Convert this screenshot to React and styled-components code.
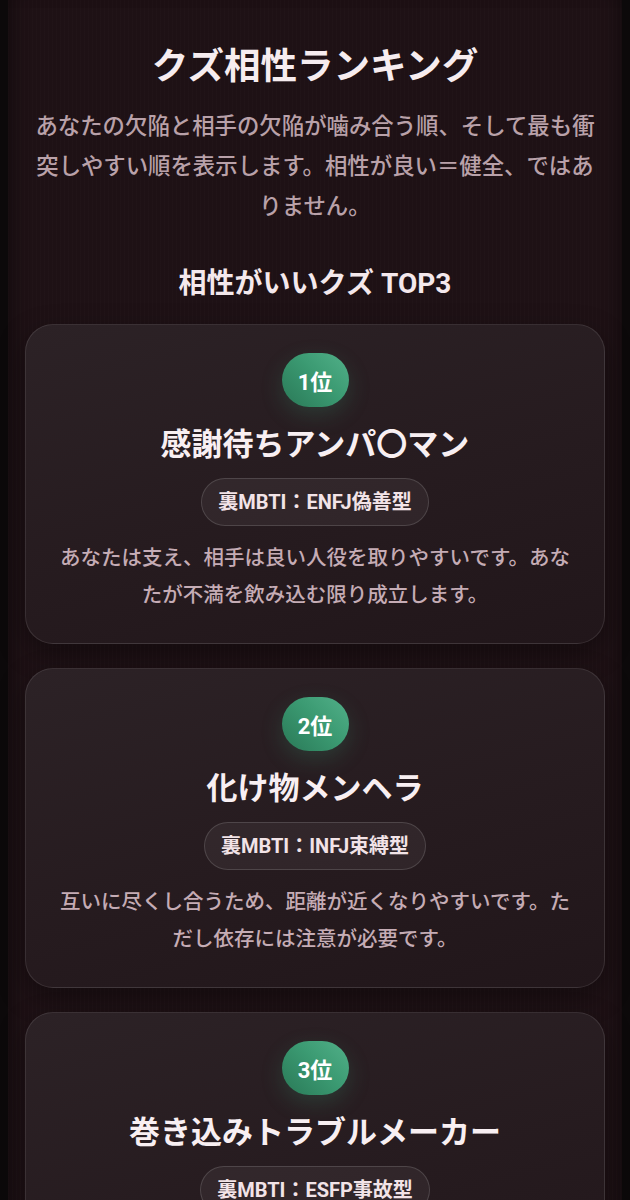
import styled, { createGlobalStyle } from "styled-components";

const GlobalStyle = createGlobalStyle`
  html, body {
    margin: 0;
    padding: 0;
    background-color: #0c090a;
  }
  body {
    font-family: Roboto, "Noto Sans CJK JP", sans-serif;
  }
`;

const Page = styled.div`
  padding: 0 8px;
  min-height: 1200px;
  background-color: #0c090a;
`;

const Main = styled.main`
  min-height: 1200px;
  padding: 43px 17px 40px;
  box-sizing: border-box;
  background-color: #1e1115;
  background-image: repeating-linear-gradient(
    90deg,
    rgba(255, 255, 255, 0.012) 0 1px,
    transparent 1px 4px
  );
  box-shadow: inset 14px 0 16px -10px rgba(0, 0, 0, 0.35),
    inset -14px 0 16px -10px rgba(0, 0, 0, 0.35);
  display: flex;
  flex-direction: column;
  align-items: center;
  text-align: center;
`;

const Title = styled.h1`
  margin: 0;
  font-size: 36.5px;
  line-height: 1.3;
  font-weight: 700;
  color: #f6ecef;
`;

const Lead = styled.p`
  margin: 16px 0 0;
  padding: 0 4px;
  font-size: 22.4px;
  line-height: 40px;
  font-weight: 500;
  color: #b9a1a9;
`;

const SectionHeading = styled.h2`
  margin: 40px 0 0;
  font-size: 28px;
  line-height: 1.3;
  font-weight: 700;
  color: #f4e8ec;
`;

const CardList = styled.div`
  margin-top: 21px;
  width: 100%;
  display: flex;
  flex-direction: column;
  gap: 24px;
`;

const Card = styled.section`
  display: flex;
  flex-direction: column;
  align-items: center;
  padding: 28px 28px 29px;
  border: 1px solid rgba(255, 255, 255, 0.1);
  border-radius: 28px;
  background: linear-gradient(165deg, #2c2226 0%, #261b1f 55%, #21161a 100%);
  box-shadow: 0 10px 28px rgba(0, 0, 0, 0.35);
`;

const Badge = styled.div`
  width: 67px;
  height: 54px;
  border-radius: 999px;
  display: flex;
  align-items: center;
  justify-content: center;
  background: linear-gradient(45deg, #2a7957 0%, #3b9a72 55%, #52b089 100%);
  box-shadow: 0 8px 22px rgba(60, 160, 118, 0.22);
  color: #ffffff;
  font-size: 22px;
  font-weight: 700;
`;

const CardTitle = styled.h3`
  margin: 17px 0 0;
  font-size: 31px;
  line-height: 1.36;
  font-weight: 700;
  color: #f8eff2;
`;

const Tag = styled.div`
  margin-top: 12px;
  padding: 9px 16px;
  border: 1px solid rgba(255, 255, 255, 0.14);
  border-radius: 999px;
  background-color: rgba(255, 255, 255, 0.05);
  font-size: 20px;
  line-height: 28px;
  font-weight: 700;
  color: #f2e3e7;
`;

const Desc = styled.p`
  margin: 14px 0 0;
  font-size: 20.5px;
  line-height: 37px;
  font-weight: 500;
  color: #c5acb5;
`;

const ranking = [
  {
    rank: 1,
    name: "感謝待ちアンパ〇マン",
    type: "裏MBTI：ENFJ偽善型",
    text: "あなたは支え、相手は良い人役を取りやすいです。あなたが不満を飲み込む限り成立します。",
  },
  {
    rank: 2,
    name: "化け物メンヘラ",
    type: "裏MBTI：INFJ束縛型",
    text: "互いに尽くし合うため、距離が近くなりやすいです。ただし依存には注意が必要です。",
  },
  {
    rank: 3,
    name: "巻き込みトラブルメーカー",
    type: "裏MBTI：ESFP事故型",
    text: "勢いで楽しい時間を作れますが、後始末はあなたに回りやすいです。",
  },
];

function App() {
  return (
    <>
      <GlobalStyle />
      <Page>
        <Main>
          <Title>クズ相性ランキング</Title>
          <Lead>
            あなたの欠陥と相手の欠陥が噛み合う順、そして最も衝突しやすい順を表示します。相性が良い＝健全、ではありません。
          </Lead>
          <SectionHeading>相性がいいクズ TOP3</SectionHeading>
          <CardList>
            {ranking.map((item) => (
              <Card key={item.rank}>
                <Badge>{item.rank}位</Badge>
                <CardTitle>{item.name}</CardTitle>
                <Tag>{item.type}</Tag>
                <Desc>{item.text}</Desc>
              </Card>
            ))}
          </CardList>
        </Main>
      </Page>
    </>
  );
}

export default App;
